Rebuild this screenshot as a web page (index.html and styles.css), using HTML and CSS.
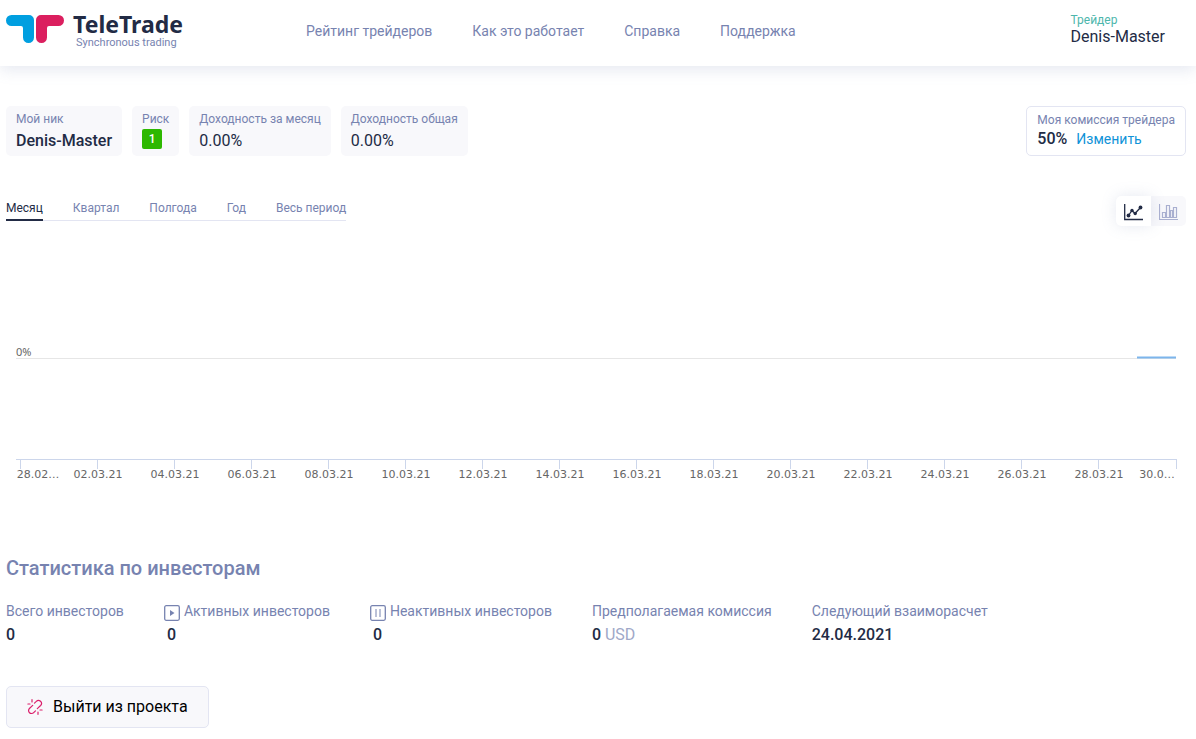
FILE: index.html
```html
<!DOCTYPE html>
<html lang="ru">
<head>
<meta charset="utf-8">
<meta name="viewport" content="width=device-width, initial-scale=1">
<title>TeleTrade</title>
<link rel="stylesheet" href="styles.css">
</head>
<body>
<header class="header">
  <a class="logo" href="#">
    <svg class="logo-mark" width="58" height="28" viewBox="0 0 58 28" aria-hidden="true">
      <path fill="#009fe0" d="M5.500 0H23a5 5 0 0 1 5 5V22.500a5.500 5.500 0 0 1-11 0V13a2 2 0 0 0-2-2H5.500a5.500 5.500 0 0 1 0-11z"/>
      <path fill="#db1f5f" d="M52.500 0H35a5 5 0 0 0-5 5V22.500a5.500 5.500 0 0 0 11 0V13a2 2 0 0 1 2-2H52.500a5.500 5.500 0 0 0 0-11z"/>
    </svg>
    <span class="logo-text">
      <span class="logo-name">TeleTrade</span>
      <span class="logo-tagline">Synchronous trading</span>
    </span>
  </a>
  <nav class="nav">
    <a href="#">Рейтинг трейдеров</a>
    <a href="#">Как это работает</a>
    <a href="#">Справка</a>
    <a href="#">Поддержка</a>
  </nav>
  <div class="account">
    <span class="account-role">Трейдер</span>
    <span class="account-name">Denis-Master</span>
  </div>
</header>
<main class="main">
  <section class="summary">
    <div class="card"><span class="card-label">Мой ник</span><strong class="card-value">Denis-Master</strong></div>
    <div class="card"><span class="card-label">Риск</span><span class="risk">1</span></div>
    <div class="card"><span class="card-label">Доходность за месяц</span><span class="card-value">0.00%</span></div>
    <div class="card"><span class="card-label">Доходность общая</span><span class="card-value">0.00%</span></div>
    <div class="card commission">
      <span class="card-label">Моя комиссия трейдера</span>
      <span class="commission-row"><strong>50%</strong><a href="#">Изменить</a></span>
    </div>
  </section>
  <section class="controls">
    <div class="tabs">
      <button class="tab active" type="button">Месяц</button>
      <button class="tab" type="button">Квартал</button>
      <button class="tab" type="button">Полгода</button>
      <button class="tab" type="button">Год</button>
      <button class="tab" type="button">Весь период</button>
    </div>
    <div class="switch">
      <button class="switch-button selected" type="button" aria-label="Линейный график">
        <svg width="20" height="17" viewBox="0 0 20 17" fill="none" stroke="#222b45">
          <path stroke-width="1.300" d="M.7 0V15.500H19"/>
          <path stroke-width="1.300" d="M4.500 11.500L8 6.500L11 9.500L16.500 3.500"/>
          <g fill="#222b45" stroke="none"><circle cx="4.500" cy="11.500" r="1.900"/><circle cx="8" cy="6.500" r="1.700"/><circle cx="11.200" cy="9.500" r="1.700"/><circle cx="16.500" cy="3.500" r="1.900"/></g>
        </svg>
      </button>
      <button class="switch-button" type="button" aria-label="Столбчатый график">
        <svg width="20" height="17" viewBox="0 0 20 17" fill="none" stroke="#a9afd0">
          <path stroke-width="1.200" d="M.5 0V15.500H19M3.500 13.500V8.500H6.500V13.500zM7.500 13.500V1.500H10.500V13.500zM11.500 13.500V6.500H13.500V13.500zM14.500 13.500V3.500H17.500V13.500z"/>
        </svg>
      </button>
    </div>
  </section>
  <svg class="chart" viewBox="0 0 1180 260" role="img" aria-label="Доходность за месяц">
    <path stroke="#e6e6e6" d="M10 132.500H1170"/>
    <path stroke="#7cb5ec" stroke-width="2" d="M1131 131.500H1170"/>
    <path fill="none" stroke="#ccd6eb" d="M10 233.500H1171M14.500 233V243M91.500 233V243M168.500 233V243M245.500 233V243M322.500 233V243M399.500 233V243M476.500 233V243M553.500 233V243M630.500 233V243M707.500 233V243M784.500 233V243M861.500 233V243M938.500 233V243M1015.500 233V243M1092.500 233V243M1170.500 233V243"/>
    <text class="zero" x="10" y="130">0%</text>
    <g class="dates">
      <text x="32" y="252">28.02…</text>
      <text x="92" y="252">02.03.21</text>
      <text x="169" y="252">04.03.21</text>
      <text x="246" y="252">06.03.21</text>
      <text x="323" y="252">08.03.21</text>
      <text x="400" y="252">10.03.21</text>
      <text x="477" y="252">12.03.21</text>
      <text x="554" y="252">14.03.21</text>
      <text x="631" y="252">16.03.21</text>
      <text x="708" y="252">18.03.21</text>
      <text x="785" y="252">20.03.21</text>
      <text x="862" y="252">22.03.21</text>
      <text x="939" y="252">24.03.21</text>
      <text x="1016" y="252">26.03.21</text>
      <text x="1093" y="252">28.03.21</text>
      <text x="1151" y="252">30.0…</text>
    </g>
  </svg>
  <section class="investors">
    <h2>Статистика по инвесторам</h2>
    <div class="stats">
      <div class="stat"><span class="stat-label">Всего инвесторов</span><strong>0</strong></div>
      <div class="stat with-icon">
        <span class="stat-label">
          <svg width="16" height="16" viewBox="0 0 16 16" aria-hidden="true"><rect x=".7" y=".7" width="14.600" height="14.600" rx="1.500" fill="none" stroke="#7783b0" stroke-width="1.300"/><path fill="#7783b0" d="M6 5L10.500 8L6 11z"/></svg>
          Активных инвесторов</span>
        <strong>0</strong>
      </div>
      <div class="stat with-icon">
        <span class="stat-label">
          <svg width="16" height="16" viewBox="0 0 16 16" aria-hidden="true" fill="none" stroke="#7783b0"><rect x=".7" y=".7" width="14.600" height="14.600" rx="1.500" stroke-width="1.300"/><path d="M6 4V12M10 4V12"/></svg>
          Неактивных инвесторов</span>
        <strong>0</strong>
      </div>
      <div class="stat"><span class="stat-label">Предполагаемая комиссия</span><span class="amount"><strong>0</strong> USD</span></div>
      <div class="stat"><span class="stat-label">Следующий взаиморасчет</span><strong>24.04.2021</strong></div>
    </div>
  </section>
  <button class="leave" type="button">
    <svg width="16" height="16" viewBox="0 0 16 16" fill="none" stroke="#db1f6b" stroke-width="1.200" stroke-linecap="round" aria-hidden="true">
      <path d="M7.500 4.200L9.300 2.400A2.900 2.900 0 0 1 13.600 6.500L10.300 9.600M5.700 6.400L2.400 9.500A2.900 2.900 0 0 0 6.700 13.600L8.500 11.800M5 .7V2.900M.9 5H3M11 13.100V15.300M13 11H15.100"/>
    </svg>
    Выйти из проекта
  </button>
</main>
</body>
</html>
```
FILE: styles.css
```css
* {
  box-sizing: border-box;
}

body {
  margin: 0;
  background: #fff;
  color: #222b45;
  font-family: Roboto, sans-serif;
  font-size: 16px;
  line-height: 20px;
}

a {
  text-decoration: none;
}

button {
  margin: 0;
  padding: 0;
  border: 0;
  background: none;
  color: inherit;
  font: inherit;
  cursor: pointer;
}

strong {
  font-weight: 500;
}

.header {
  display: flex;
  align-items: flex-start;
  height: 66px;
  padding: 0 31px 0 6px;
  box-shadow: 0 4px 14px rgba(119, 131, 176, 0.18);
}

.logo {
  display: flex;
  gap: 9px;
  width: 300px;
  padding-top: 10px;
}

.logo-mark {
  margin-top: 5px;
}

.logo-text {
  display: flex;
  flex-direction: column;
}

.logo-name {
  color: #222b45;
  font: bold 23px/28px "Noto Sans", sans-serif;
}

.logo-tagline {
  padding-left: 3px;
  color: #7783b0;
  font-size: 11px;
  line-height: 10px;
}

.nav {
  display: flex;
  gap: 40px;
  padding-top: 21px;
}

.nav a {
  color: #7783b0;
  font-size: 14px;
}

.account {
  display: flex;
  flex-direction: column;
  margin-left: auto;
  padding-top: 12px;
}

.account-role {
  color: #4db6ac;
  font-size: 12px;
  line-height: 16px;
}

.account-name {
  line-height: 18px;
}

.main {
  padding: 40px 10px 11px 6px;
}

.summary {
  display: flex;
  gap: 10px;
}

.card {
  display: flex;
  flex-direction: column;
  height: 50px;
  padding: 4px 10px;
  border-radius: 5px;
  background: #f8f8fb;
}

.card-label {
  color: #7783b0;
  font-size: 12px;
  line-height: 18px;
}

.card-value {
  line-height: 26px;
}

.risk {
  width: 20px;
  height: 20px;
  margin-top: 1px;
  border-radius: 2px;
  background: #2db800;
  color: #fff;
  font-size: 12px;
  font-weight: 500;
  text-align: center;
}

.commission {
  margin-left: auto;
  border: 1px solid #e3e5f2;
  background: #fff;
}

.commission-row {
  display: flex;
  gap: 9px;
  align-items: baseline;
}

.commission a {
  color: #1093d8;
  font-size: 14px;
}

.controls {
  display: flex;
  justify-content: space-between;
  margin-top: 40px;
}

.tabs {
  display: flex;
  gap: 30px;
  align-self: flex-start;
  height: 25px;
  border-bottom: 1px solid #e3e5f2;
}

.tab {
  height: 25px;
  padding-top: 1px;
  border-bottom: 2px solid transparent;
  color: #7783b0;
  font-size: 12px;
}

.tab.active {
  border-color: #222b45;
  color: #222b45;
}

.switch {
  display: flex;
  height: 30px;
  border-radius: 5px;
  background: #f8f8fb;
}

.switch-button {
  display: flex;
  align-items: center;
  justify-content: center;
  width: 35px;
  padding-top: 2px;
  border-radius: 5px;
}

.switch-button.selected {
  border-radius: 5px 0 0 5px;
  background: #fff;
  box-shadow: 0 0 15px rgba(119, 131, 176, 0.18);
}

.chart {
  display: block;
  width: 100%;
}

.chart text {
  fill: #666;
  font-size: 11px;
}

.chart .zero {
  font-family: "Noto Sans", sans-serif;
}

.dates {
  font-family: "DejaVu Sans", sans-serif;
  text-anchor: middle;
}

.investors {
  margin-top: 70px;
}

h2 {
  margin: 0;
  color: #7783b0;
  font-size: 20px;
  font-weight: 500;
  line-height: 24px;
}

.stats {
  display: flex;
  gap: 40px;
  margin-top: 20px;
}

.stat {
  display: flex;
  flex-direction: column;
  gap: 4px;
}

.stat-label {
  display: flex;
  gap: 4px;
  height: 21px;
  color: #7783b0;
  font-size: 14px;
  line-height: 22px;
}

.stat-label svg {
  align-self: flex-end;
}

.with-icon strong {
  padding-left: 3px;
}

.amount {
  color: #a0a8c8;
}

.amount strong {
  color: #222b45;
}

.leave {
  display: flex;
  gap: 10px;
  align-items: center;
  height: 42px;
  margin-top: 41px;
  padding: 0 20px;
  border: 1px solid #e3e5f2;
  border-radius: 5px;
  background: #f8f8fb;
  color: #000;
}
```
